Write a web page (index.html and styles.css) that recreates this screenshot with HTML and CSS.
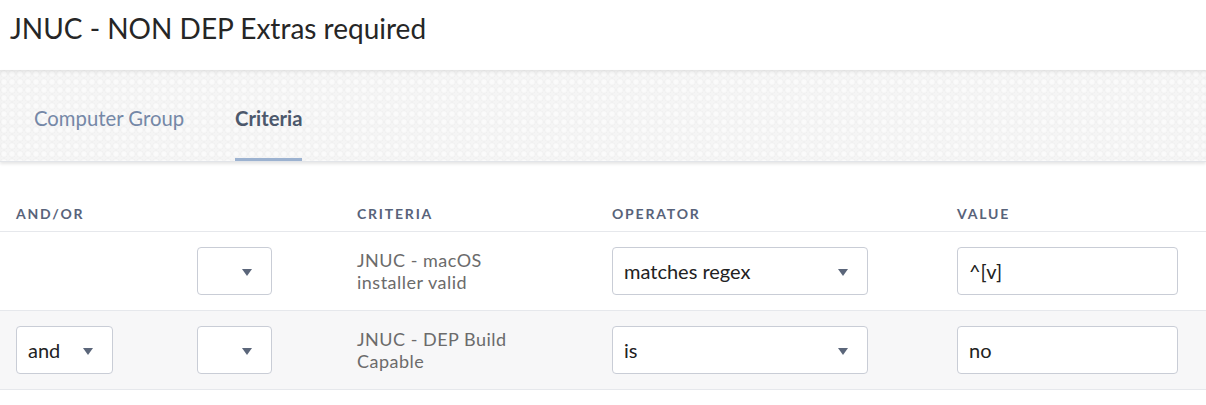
FILE: index.html
```html
<!DOCTYPE html>
<html>
<head>
<meta charset="utf-8">
<link rel="stylesheet" href="styles.css">
</head>
<body>
<header class="page-header">
  <h1 class="title">JNUC - NON DEP Extras required</h1>
</header>
<nav class="tabs">
  <a class="tab">Computer Group</a>
  <a class="tab active">Criteria</a>
</nav>
<section class="criteria">
  <div class="row head">
    <div class="col">AND/OR</div>
    <div class="col"></div>
    <div class="col">CRITERIA</div>
    <div class="col">OPERATOR</div>
    <div class="col">VALUE</div>
  </div>
  <div class="row">
    <div class="col"></div>
    <div class="col"><div class="select paren"><span class="arrow"></span></div></div>
    <div class="col crit"><div>JNUC - macOS</div><div>installer valid</div></div>
    <div class="col"><div class="select op"><span class="txt">matches regex</span><span class="arrow"></span></div></div>
    <div class="col"><div class="input">^[v]</div></div>
  </div>
  <div class="row alt">
    <div class="col"><div class="select andor"><span class="txt">and</span><span class="arrow"></span></div></div>
    <div class="col"><div class="select paren"><span class="arrow"></span></div></div>
    <div class="col crit"><div>JNUC - DEP Build</div><div>Capable</div></div>
    <div class="col"><div class="select op"><span class="txt">is</span><span class="arrow"></span></div></div>
    <div class="col"><div class="input">no</div></div>
  </div>
</section>
</body>
</html>
```
FILE: styles.css
```css
* { box-sizing: border-box; }
body {
  margin: 0;
  background: #fff;
  font-family: Lato, "Open Sans", sans-serif;
  color: #333;
}
.page-header {
  height: 70px;
  padding: 11px 10px 0;
  background: #fff;
}
.title {
  margin: 0;
  font-size: 28px;
  font-weight: 400;
  color: #262626;
  line-height: 34px;
}
.tabs {
  height: 92px;
  display: flex;
  align-items: stretch;
  padding-left: 34px;
  gap: 51px;
  background-color: #f5f5f5;
  background-image: radial-gradient(circle at 50% 50%, #fbfbfb 0, #fafafa 2px, #f1f1f1 3.5px, transparent 4px);
  background-size: 8px 8px;
  box-shadow: inset 0 4px 4px -2px rgba(0,0,0,0.08), 0 2px 3px rgba(0,0,0,0.10);
  border-bottom: 1px solid #e2e4e8;
}
.tab {
  display: flex;
  align-items: center;
  padding-top: 8px;
  padding-bottom: 1px;
  font-size: 20.3px;
  color: #7588a7;
  border-bottom: 3px solid transparent;
}
.tab.active {
  color: #4c586c;
  font-weight: 700;
  border-bottom-color: #9cb2d0;
}
.row {
  display: grid;
  grid-template-columns: 181px 160px 255px 345px 1fr;
  padding-left: 16px;
  align-items: center;
  height: 79px;
  border-bottom: 1px solid #e6e8ec;
}
.row.head {
  height: 70px;
  align-items: end;
  padding-bottom: 9px;
  font-size: 14px;
  font-weight: 700;
  letter-spacing: 1.8px;
  color: #58637a;
}
.row.alt {
  background: #f7f7f8;
}
.crit {
  font-size: 18px;
  line-height: 21.7px;
  letter-spacing: 0.5px;
  color: #6b6b6b;
  padding-top: 1px;
}
.select, .input {
  height: 48px;
  background: #fff;
  border: 1px solid #c9cdd6;
  border-radius: 4px;
  display: flex;
  align-items: center;
  font-size: 20px;
  color: #222;
}
.select { position: relative; }
.arrow {
  width: 0;
  height: 0;
  border-left: 5px solid transparent;
  border-right: 5px solid transparent;
  border-top: 7px solid #5b667a;
  position: absolute;
  top: 21px;
}
.paren { width: 75px; }
.paren .arrow { left: 44px; }
.andor { width: 97px; padding-left: 11px; }
.andor .arrow { left: 66px; }
.op { width: 256px; padding-left: 11px; }
.op .arrow { left: 225px; }
.input { width: 221px; padding-left: 11px; }
```
